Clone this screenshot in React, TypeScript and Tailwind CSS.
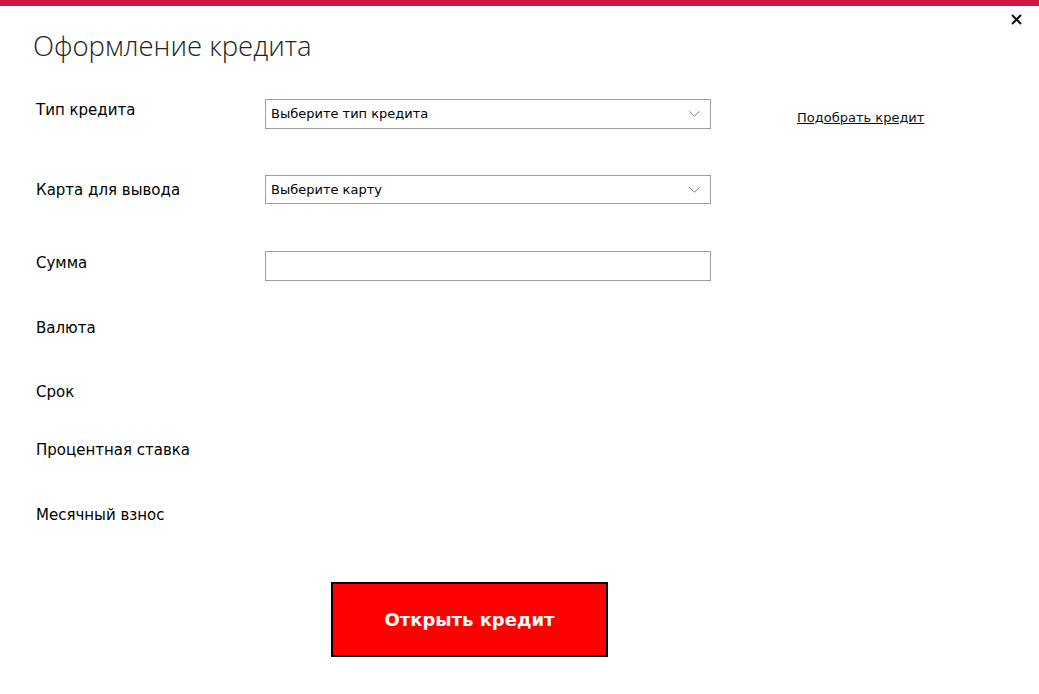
import React from 'react';

function Chevron() {
  return (
    <svg width="11" height="7" viewBox="0 0 11 7" className="absolute right-[10px] top-1/2 -translate-y-1/2">
      <path d="M0.5 0.8 L5.5 5.8 L10.5 0.8" fill="none" stroke="#7a7a7a" strokeWidth="1" />
    </svg>
  );
}

function SelectBox({ text, h }: { text: string; h: string }) {
  return (
    <div className={`relative w-[446px] ${h} border border-[#9f9f9f] bg-white flex items-center pl-[5px] text-[13px] text-black`}>
      <span>{text}</span>
      <Chevron />
    </div>
  );
}

export default function App() {
  const font = { fontFamily: 'Tahoma, "DejaVu Sans", sans-serif' };
  return (
    <div className="w-[1039px] h-[694px] bg-white relative overflow-hidden" style={font}>
      <div className="h-[6px] bg-[#d21243]" />

      {/* close */}
      <button className="absolute top-[12px] right-[16px] w-[14px] h-[14px] flex items-center justify-center">
        <svg width="11" height="11" viewBox="0 0 11 11">
          <path d="M1 1 L10 10 M10 1 L1 10" stroke="#111" strokeWidth="2" />
        </svg>
      </button>

      <h1
        className="ml-[33px] mt-[22px] text-[27.5px] leading-[36px] font-light text-[#222]"
        style={{ fontFamily: '"Open Sans", sans-serif' }}>
        Оформление кредита
      </h1>

      <div className="pl-[36px] text-[15px] text-black">
        {/* Тип кредита */}
        <div className="mt-[35px] flex h-[30px]">
          <div className="w-[229px] pt-[2px] leading-[18px]">Тип кредита</div>
          <SelectBox text="Выберите тип кредита" h="h-[30px]" />
          <a href="#" className="ml-[86px] mt-[10px] text-[13px] leading-[18px] underline text-[#111]">
            Подобрать кредит
          </a>
        </div>

        {/* Карта */}
        <div className="mt-[46px] flex h-[29px]">
          <div className="w-[229px] pt-[6px] leading-[18px]">Карта для вывода</div>
          <SelectBox text="Выберите карту" h="h-[29px]" />
        </div>

        {/* Сумма */}
        <div className="mt-[47px] flex h-[30px]">
          <div className="w-[229px] pt-[3px] leading-[18px]">Сумма</div>
          <input className="w-[446px] h-[30px] border border-[#9f9f9f] bg-white outline-none px-[5px]" />
        </div>

        <div className="mt-[38px] leading-[18px]">Валюта</div>
        <div className="mt-[46px] leading-[18px]">Срок</div>
        <div className="mt-[40px] leading-[18px]">Процентная ставка</div>
        <div className="mt-[47px] leading-[18px]">Месячный взнос</div>

        <button className="mt-[58px] ml-[295px] w-[277px] h-[75px] bg-[#ff0000] border-2 border-black text-white font-bold text-[18px]">
          Открыть кредит
        </button>
      </div>
    </div>
  );
}
